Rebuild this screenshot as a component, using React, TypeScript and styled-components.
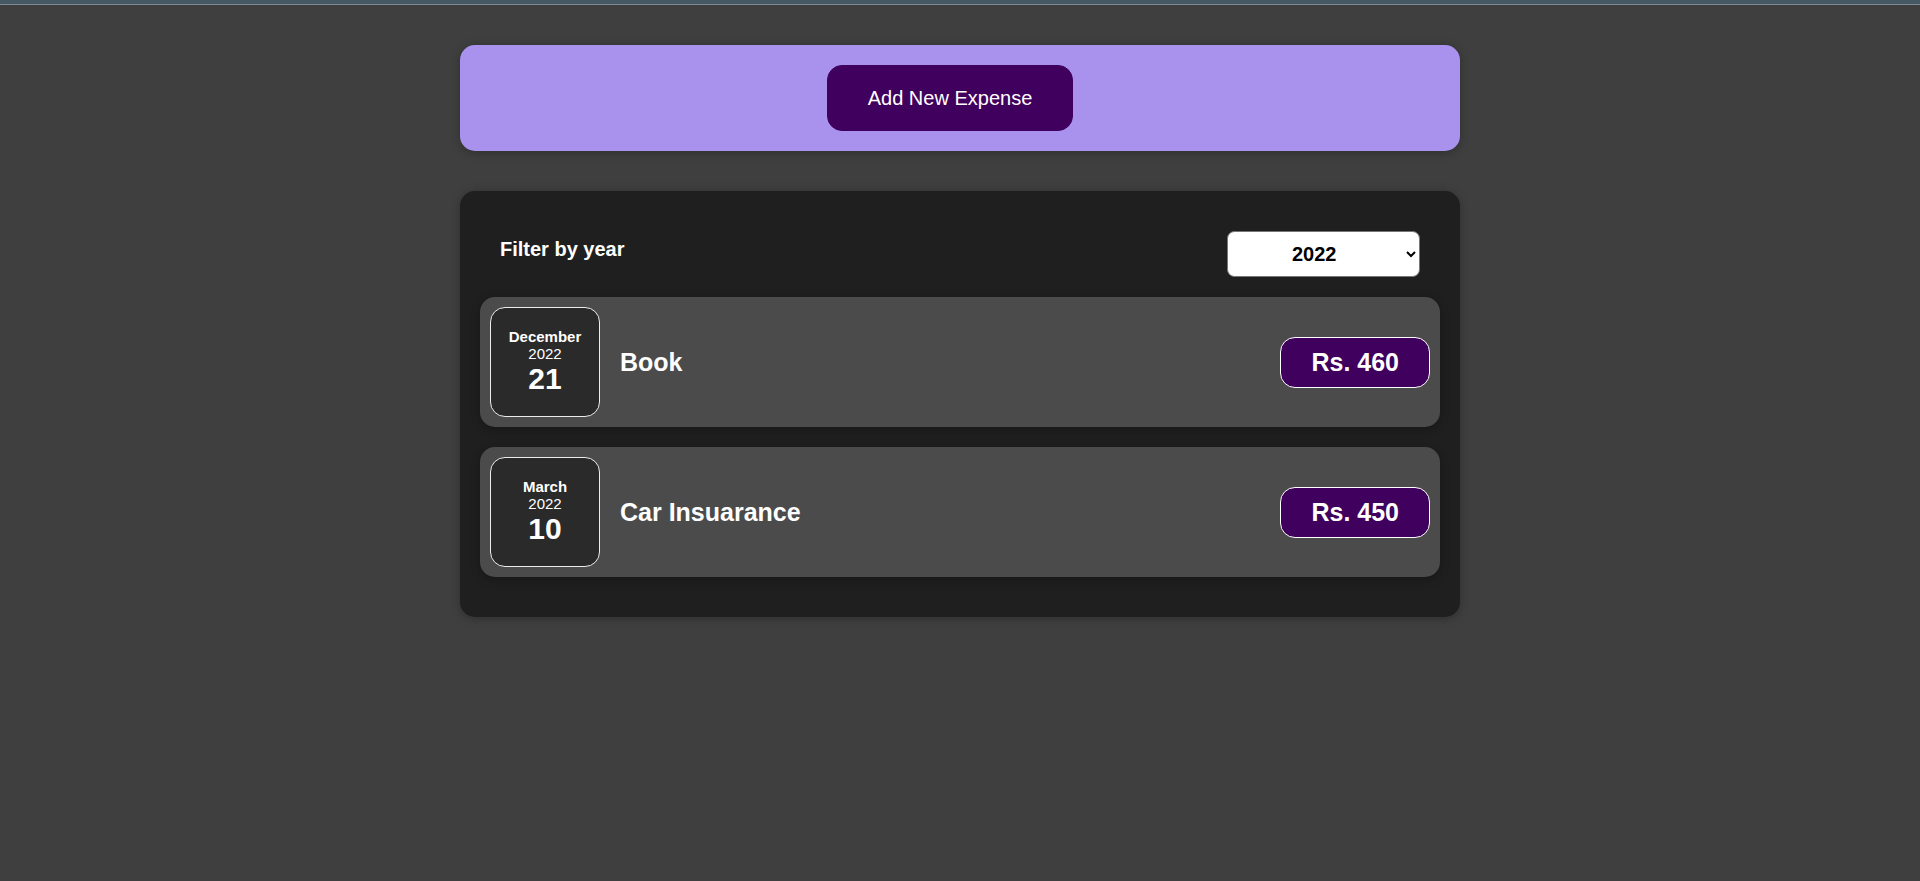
import React from "react";
import styled, { createGlobalStyle } from "styled-components";

const GlobalStyle = createGlobalStyle`
  html, body {
    margin: 0;
    padding: 0;
    background-color: #3f3f3f;
    font-family: "Liberation Sans", Arial, sans-serif;
    font-size: 20px;
  }
  * { box-sizing: border-box; }
`;

const TopStrip = styled.div`
  height: 5px;
  background-color: #465864;
  border-bottom: 1px solid #7b8c96;
`;

const Page = styled.main`
  display: flex;
  flex-direction: column;
  align-items: center;
  gap: 40px;
  padding: 40px 0;
`;

const Card = styled.section`
  width: 1000px;
  max-width: 95%;
  border-radius: 15px;
  box-shadow: 0 1.25px 10px rgba(0, 0, 0, 0.25);
  padding: 20px;
`;

const NewExpenseCard = styled(Card)`
  background-color: #a892ee;
  display: flex;
  justify-content: center;
`;

const PrimaryButton = styled.button`
  font: inherit;
  font-family: "Liberation Sans", Arial, sans-serif;
  font-size: 20px;
  line-height: 24px;
  cursor: pointer;
  padding: 20px 40px;
  border: 1px solid #40005d;
  background-color: #40005d;
  color: white;
  border-radius: 15px;
  margin-right: 20px;
`;

const ExpensesCard = styled(Card)`
  background-color: #1f1f1f;
  display: flex;
  flex-direction: column;
  gap: 20px;
  padding-bottom: 40px;
`;

const FilterBar = styled.div`
  display: flex;
  align-items: center;
  justify-content: space-between;
  padding: 0 20px;
  margin-top: 20px;
  color: white;
`;

const FilterLabel = styled.label`
  font-weight: bold;
  font-size: 20px;
  margin-bottom: 10px;
`;

const YearSelect = styled.select`
  font: inherit;
  font-family: "Liberation Sans", Arial, sans-serif;
  font-size: 20px;
  font-weight: bold;
  width: 193px;
  height: 46px;
  padding: 10px 20px 10px 60px;
  border-radius: 7.5px;
  background: white;
  color: black;
  border: 1px solid #767676;
`;

const ItemRow = styled.div`
  display: flex;
  align-items: center;
  justify-content: space-between;
  padding: 10px;
  border-radius: 15px;
  background-color: #4b4b4b;
  box-shadow: 0 2.5px 10px rgba(0, 0, 0, 0.25);
`;

const Description = styled.div`
  display: flex;
  flex: 1;
  align-items: center;
  justify-content: flex-start;
`;

const DateBox = styled.div`
  display: flex;
  flex-direction: column;
  align-items: center;
  justify-content: center;
  width: 110px;
  height: 110px;
  border: 1px solid #ececec;
  background-color: #2a2a2a;
  color: white;
  border-radius: 15px;
`;

const DateText = styled.div<{ $size: number; $bold?: boolean }>`
  font-size: ${(p) => p.$size}px;
  font-weight: ${(p) => (p.$bold ? "bold" : "normal")};
`;

const Title = styled.h2`
  flex: 1;
  margin: 0 20px;
  font-size: 25px;
  color: white;
`;

const Price = styled.div`
  font-size: 25px;
  font-weight: bold;
  color: white;
  background-color: #40005d;
  border: 1px solid white;
  padding: 10px 30px;
  border-radius: 15px;
`;

const expenses = [
  { id: 1, month: "December", year: "2022", day: "21", title: "Book", amount: 460 },
  { id: 2, month: "March", year: "2022", day: "10", title: "Car Insuarance", amount: 450 },
];

export default function App() {
  return (
    <>
      <GlobalStyle />
      <TopStrip />
      <Page>
        <NewExpenseCard>
          <PrimaryButton>Add New Expense</PrimaryButton>
        </NewExpenseCard>
        <ExpensesCard>
          <FilterBar>
            <FilterLabel>Filter by year</FilterLabel>
            <YearSelect defaultValue="2022">
              <option value="2022">2022</option>
              <option value="2021">2021</option>
              <option value="2020">2020</option>
              <option value="2019">2019</option>
            </YearSelect>
          </FilterBar>
          {expenses.map((e) => (
            <ItemRow key={e.id}>
              <DateBox>
                <DateText $size={15} $bold>{e.month}</DateText>
                <DateText $size={15}>{e.year}</DateText>
                <DateText $size={30} $bold>{e.day}</DateText>
              </DateBox>
              <Description>
                <Title>{e.title}</Title>
              </Description>
              <Price>Rs. {e.amount}</Price>
            </ItemRow>
          ))}
        </ExpensesCard>
      </Page>
    </>
  );
}
